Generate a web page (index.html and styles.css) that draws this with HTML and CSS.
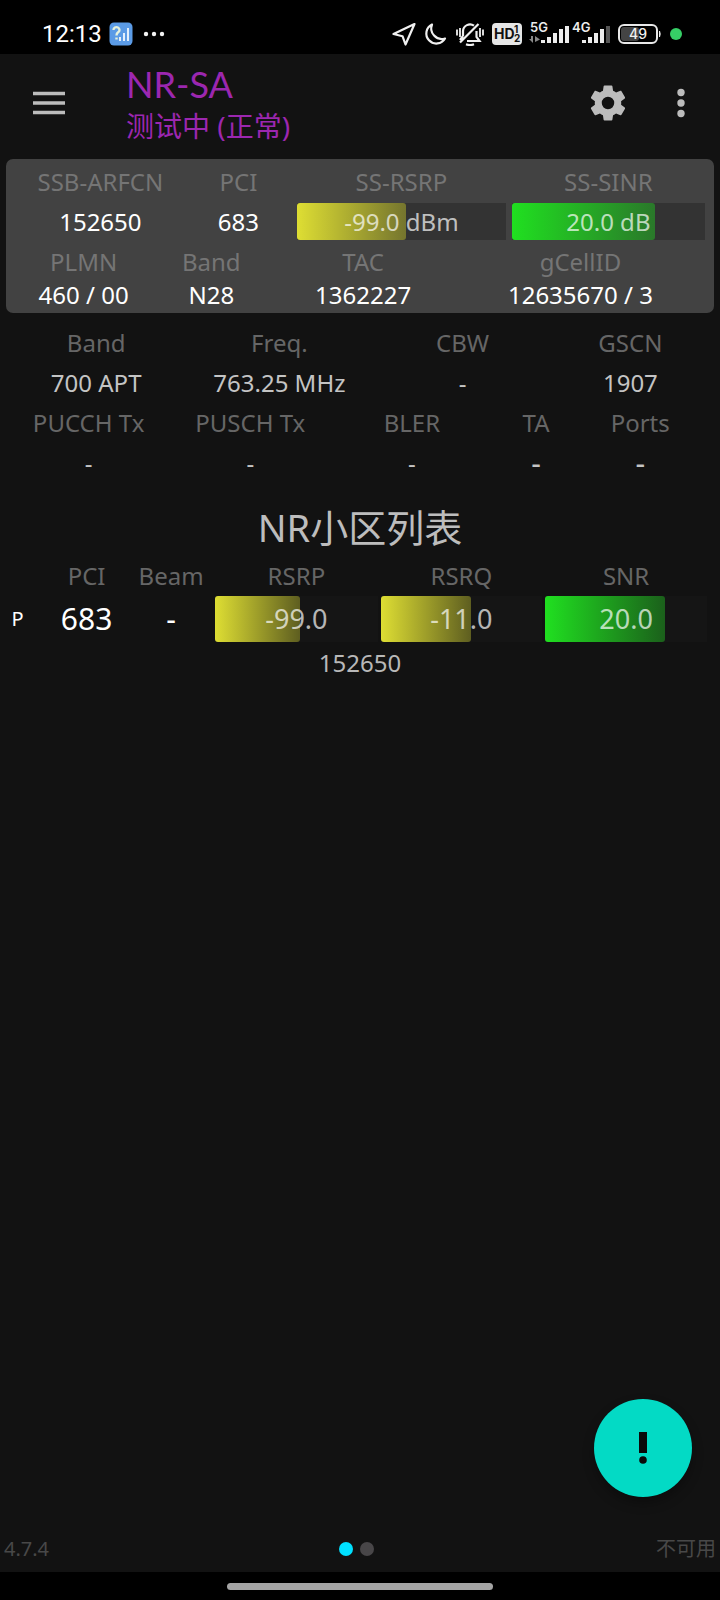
FILE: index.html
```html
<!DOCTYPE html>
<html lang="zh-CN">
<head>
<meta charset="utf-8">
<meta name="viewport" content="width=device-width, initial-scale=1">
<title>NR-SA</title>
<link rel="stylesheet" href="styles.css">
</head>
<body>
<div class="status-bar">
  <span class="clock">12:13</span>
  <svg class="app-icon" width="24" height="24" viewBox="0 0 24 24" aria-hidden="true">
    <rect x="0.5" y="0.5" width="23" height="23" rx="4.5" fill="#5b9be6"/>
    <path d="M4.5 8a3 2.8 0 1 1 4.6 2.3C7.8 11.2 7.5 11.8 7.5 13.5M7.5 15.5v2" fill="none" stroke="#e6f2dc" stroke-width="2.4"/>
    <path d="M11 19v-4M15 19v-8M19 19V6" stroke="#e3effc" stroke-width="2"/>
  </svg>
  <svg class="more-notices" width="22" height="6" viewBox="0 0 22 6" fill="#f2f2f2" aria-hidden="true">
    <circle cx="3" cy="3" r="2.2"/><circle cx="11" cy="3" r="2.2"/><circle cx="19" cy="3" r="2.2"/>
  </svg>
  <div class="status-icons">
    <svg width="24" height="24" viewBox="0 0 24 24" fill="none" stroke="#f0f0f0" stroke-width="2.2" stroke-linejoin="round" aria-hidden="true">
      <path d="M22.500 2 1.500 12l9 2.200 3 8.300z"/>
    </svg>
    <svg width="24" height="24" viewBox="0 0 24 24" fill="none" stroke="#f0f0f0" stroke-width="2.2" stroke-linejoin="round" aria-hidden="true">
      <path d="M8 2.500A10 10 0 1 0 21 16.500 10.600 10.600 0 0 1 8 2.500z"/>
    </svg>
    <svg width="28" height="24" viewBox="0 0 28 24" fill="none" stroke="#f0f0f0" stroke-width="2.2" aria-hidden="true">
      <path d="M7 14V9a7 7 0 0 1 11-5.300M20.500 9v6l3 4H11M4 20.500 22.500 2M7 14l-3 4M10 22.300q4 1.500 8 0"/>
      <path d="M1 7.500v6M4 6v9M24 6v9M27 7.500v6" stroke-width="1.800"/>
    </svg>
    <svg class="hd" width="30" height="24" viewBox="0 0 30 24" aria-hidden="true">
      <rect y="1" width="30" height="22" rx="4" fill="#e6e6e6"/>
      <text x="2" y="17" font-size="14" class="badge-text">HD</text>
      <text x="22" y="11" font-size="10" class="badge-text">1</text>
      <text x="22" y="20" font-size="10" class="badge-text">2</text>
    </svg>
    <svg class="signal" width="40" height="30" viewBox="0 -3 40 30" fill="#ececec" aria-hidden="true">
      <text x="1" y="10" font-size="13" class="net-text">5G</text>
      <path d="M0 17h2v-3h2v7zM6 14l5 3.500L6 20z" fill="#888"/>
      <path d="M12 18h4v3h-4zM18 15h4v6h-4zM24 11h4v10h-4zM30 7h4v14h-4zM36 4h4v17h-4z"/>
    </svg>
    <svg class="signal" width="38" height="30" viewBox="0 -3 38 30" fill="#ececec" aria-hidden="true">
      <text x="0" y="10" font-size="13" class="net-text">4G</text>
      <path d="M10 18h4v3h-4zM16 15h4v6h-4zM22 11h4v10h-4zM28 7h4v14h-4z"/>
      <path d="M34 4h4v17h-4z" fill="#555"/>
    </svg>
    <svg class="battery" width="44" height="24" viewBox="0 0 44 24" aria-hidden="true">
      <rect x="3" y="5" width="18" height="14" rx="3" fill="#444"/>
      <rect x="1" y="3" width="38" height="18" rx="5" fill="none" stroke="#e8e8e8" stroke-width="2"/>
      <path d="M41 9h1q1.500 3 0 6h-1z" fill="#e8e8e8"/>
      <text x="20" y="17" font-size="14" text-anchor="middle" class="level-text">49</text>
    </svg>
    <span class="live-dot"></span>
  </div>
</div>

<header class="app-bar">
  <button class="icon-button menu-button" type="button" aria-label="菜单">
    <svg width="34" height="24" viewBox="0 0 34 24" aria-hidden="true"><path d="M1 2.500h32M1 12h32M1 21.500h32" stroke="#bcbcbc" stroke-width="3.600"/></svg>
  </button>
  <div class="titles">
    <h1 class="mode">NR-SA</h1>
    <p class="mode-state">测试中 (正常)</p>
  </div>
  <button class="icon-button gear-button" type="button" aria-label="设置">
    <svg width="44" height="44" viewBox="0 0 24 24" fill="#bcbcbc" aria-hidden="true"><path d="M19.140 12.940c.04-.3.06-.61.06-.94 0-.32-.02-.64-.07-.94l2.030-1.580c.18-.14.23-.41.12-.61l-1.920-3.320c-.12-.22-.37-.29-.59-.22l-2.390.96c-.5-.38-1.030-.7-1.620-.94l-.36-2.540c-.04-.24-.24-.41-.48-.41h-3.840c-.24 0-.43.17-.47.41l-.36 2.540c-.59.24-1.130.57-1.620.94l-2.390-.96c-.22-.08-.47 0-.59.22L2.740 8.870c-.12.21-.08.47.12.61l2.030 1.580c-.05.3-.09.63-.09.94s.02.64.07.94l-2.030 1.580c-.18.14-.23.41-.12.61l1.920 3.320c.12.22.37.29.59.22l2.390-.96c.5.38 1.030.7 1.620.94l.36 2.540c.05.24.24.41.48.41h3.840c.24 0 .44-.17.47-.41l.36-2.540c.59-.24 1.130-.56 1.620-.94l2.390.96c.22.08.47 0 .59-.22l1.920-3.320c.12-.22.07-.47-.12-.61l-2.010-1.580zM12 15.400A3.400 3.400 0 1 1 12 8.600a3.400 3.400 0 0 1 0 6.800z"/></svg>
  </button>
  <button class="icon-button more-button" type="button" aria-label="更多">
    <svg width="8" height="30" viewBox="0 0 8 30" fill="#bcbcbc" aria-hidden="true"><circle cx="4" cy="4.500" r="3.700"/><circle cx="4" cy="15" r="3.700"/><circle cx="4" cy="25.500" r="3.700"/></svg>
  </button>
</header>

<main class="content">
  <section class="serving-card">
    <table class="grid serving-signal">
      <thead><tr><th class="c1">SSB-ARFCN</th><th class="c2">PCI</th><th class="c3">SS-RSRP</th><th class="c4">SS-SINR</th></tr></thead>
      <tbody><tr>
        <td>152650</td><td>683</td>
        <td><div class="bar"><span class="fill yellow" style="width:52%"></span><span class="reading">-99.0 dBm</span></div></td>
        <td><div class="bar"><span class="fill green" style="width:74%"></span><span class="reading">20.0 dB</span></div></td>
      </tr></tbody>
    </table>
    <table class="grid serving-id">
      <thead><tr><th class="c1">PLMN</th><th class="c2">Band</th><th class="c3">TAC</th><th class="c4">gCellID</th></tr></thead>
      <tbody><tr><td>460 / 00</td><td>N28</td><td>1362227</td><td>12635670 / 3</td></tr></tbody>
    </table>
  </section>

  <section class="details">
    <table class="grid radio">
      <thead><tr><th class="c1">Band</th><th class="c2">Freq.</th><th class="c3">CBW</th><th class="c4">GSCN</th></tr></thead>
      <tbody><tr><td>700 APT</td><td>763.25 MHz</td><td>-</td><td>1907</td></tr></tbody>
    </table>
    <table class="grid power">
      <thead><tr><th class="c1">PUCCH Tx</th><th class="c2">PUSCH Tx</th><th class="c3">BLER</th><th class="c4">TA</th><th class="c5">Ports</th></tr></thead>
      <tbody><tr><td>-</td><td>-</td><td>-</td><td class="large">-</td><td class="large">-</td></tr></tbody>
    </table>
  </section>

  <section class="cells">
    <h2 class="cells-title">NR小区列表</h2>
    <table class="grid cell-list">
      <thead><tr><th class="c0"></th><th class="c1">PCI</th><th class="c2">Beam</th><th class="c3">RSRP</th><th class="c4">RSRQ</th><th class="c5">SNR</th></tr></thead>
      <tbody><tr>
        <td class="flag">P</td><td class="pci">683</td><td class="pci">-</td>
        <td><div class="bar"><span class="fill yellow" style="width:52%"></span><span class="reading">-99.0</span></div></td>
        <td><div class="bar"><span class="fill yellow" style="width:56%"></span><span class="reading">-11.0</span></div></td>
        <td><div class="bar"><span class="fill green" style="width:74%"></span><span class="reading">20.0</span></div></td>
      </tr></tbody>
    </table>
    <p class="arfcn">152650</p>
  </section>
</main>

<footer class="footer">
  <span>4.7.4</span>
  <div class="pager"><span class="dot active"></span><span class="dot"></span></div>
  <span class="availability">不可用</span>
</footer>
<div class="gesture-nav"><span class="pill"></span></div>

<button class="fab" type="button" aria-label="提示">
  <svg width="10" height="34" viewBox="0 0 10 34" fill="#0a0a0a" aria-hidden="true"><path d="M1 1h8v21H1z"/><circle cx="5" cy="29" r="3.800"/></svg>
</button>
</body>
</html>
```
FILE: styles.css
```css
* {
  box-sizing: border-box;
}

body {
  margin: 0;
  min-height: 100vh;
  display: flex;
  flex-direction: column;
  position: relative;
  background: #121212;
  color: #fff;
  font-family: "Noto Sans", "Noto Sans CJK SC", sans-serif;
  font-size: 24px;
  line-height: 24px;
}

h1, h2, p {
  margin: 0;
  font-weight: 400;
}

/* System status bar */
.status-bar {
  display: flex;
  align-items: center;
  height: 54px;
  padding: 14px 38px 0 42px;
  background: #000;
}

.clock {
  font-family: Roboto, sans-serif;
  font-size: 24px;
}

.app-icon {
  margin-left: 7px;
}

.more-notices {
  margin-left: 10px;
}

.status-icons {
  display: flex;
  align-items: center;
  gap: 8px;
  margin-left: auto;
}

.status-icons text {
  font-family: Inter, sans-serif;
}

.signal {
  margin-left: -1px;
}

.signal + .signal {
  margin-left: -5px;
}

.badge-text {
  font-weight: 700;
  fill: #111;
}

.net-text {
  font-weight: 600;
  fill: #ececec;
}

.level-text {
  font-weight: 500;
  fill: #f0f0f0;
}

.live-dot {
  width: 12px;
  height: 12px;
  border-radius: 50%;
  background: #36cf66;
}

/* App bar */
.app-bar {
  display: flex;
  align-items: center;
  min-height: 98px;
  padding: 0 19px 0 20px;
}

.icon-button {
  display: flex;
  align-items: center;
  justify-content: center;
  padding: 0;
  height: 58px;
  border: 0;
  background: none;
}

.menu-button {
  width: 58px;
}

.gear-button {
  width: 58px;
  margin-right: 24px;
}

.more-button {
  width: 40px;
}

.titles {
  flex: 1;
  padding-left: 48px;
  color: #9c27b0;
}

.mode {
  font-family: Lato, sans-serif;
  font-size: 36px;
  line-height: 46px;
}

.mode-state {
  font-size: 28px;
  line-height: 38px;
}

/* Label/value tables */
.content {
  flex: 1;
}

.grid {
  table-layout: fixed;
  border-collapse: collapse;
}

.grid th,
.grid td {
  padding: 0;
  height: 40px;
  text-align: center;
  vertical-align: middle;
  white-space: nowrap;
}

.grid th {
  color: #757575;
  font-weight: 400;
}

.bar {
  display: grid;
  background: #333;
}

.fill,
.reading {
  grid-area: 1 / 1;
}

.fill {
  border-radius: 3px;
}

.yellow {
  background: linear-gradient(90deg, #dede33, #75752e);
}

.green {
  background: linear-gradient(90deg, #20e020, #2a782a);
}

.reading {
  align-self: center;
  color: rgba(255, 255, 255, 0.7);
}

/* Serving cell */
.serving-card {
  margin: 7px 6px 0;
  padding: 2px 0 6px;
  border-radius: 7px;
  background: #424242;
}

.serving-signal {
  width: calc(100% - 9px);
}

.serving-signal .c1 { width: 27%; }
.serving-signal .c2 { width: 12.5%; }
.serving-signal .c3 { width: 32%; }
.serving-signal .c4 { width: 28.5%; }

.serving-card .serving-signal th {
  height: 42px;
}

.serving-card .serving-signal td {
  height: 37px;
}

.serving-signal th:nth-child(3),
.serving-signal td:nth-child(3) {
  padding-left: 15px;
}

.serving-signal th:nth-child(4),
.serving-signal td:nth-child(4) {
  padding-left: 6px;
}

.serving-signal .bar {
  height: 37px;
}

.serving-id {
  width: calc(100% - 18px);
}

.serving-id .c1 { width: 22.5%; }
.serving-id .c2 { width: 14.5%; }
.serving-id .c3 { width: 29.5%; }
.serving-id .c4 { width: 33.5%; }

.serving-card .serving-id th {
  height: 43px;
}

.serving-card .serving-id td {
  height: 24px;
}

/* Radio details */
.details {
  padding-top: 10px;
}

.details th {
  color: #666;
}

.details td {
  color: #c4c4c4;
}

.radio {
  width: calc(100% - 18px);
}

.radio .c1 { width: 27.4%; }
.radio .c2 { width: 24.8%; }
.radio .c3 { width: 27.4%; }
.radio .c4 { width: 20.4%; }

.power {
  width: calc(100% - 11px);
}

.power .c1 { width: 25%; }
.power .c2 { width: 20.6%; }
.power .c3 { width: 25%; }
.power .c4 { width: 10%; }
.power .c5 { width: 19.4%; }

.details .large {
  font-size: 30px;
}

/* Cell list */
.cells-title {
  padding-top: 20px;
  font-size: 38px;
  line-height: 48px;
  text-align: center;
  color: #bdbdbd;
}

.cell-list {
  width: calc(100% - 13px);
  margin-top: 5px;
}

.cell-list .c0 { width: 5%; }
.cell-list .c1 { width: 14.5%; }
.cell-list .c2 { width: 9.4%; }
.cell-list .c3 { width: 24.5%; }
.cell-list .c4 { width: 23.3%; }
.cell-list .c5 { width: 23.3%; }

.cell-list th {
  color: #666;
}

.cells .cell-list td {
  height: 46px;
}

.cell-list th:nth-child(4),
.cell-list td:nth-child(4) {
  padding-left: 11px;
}

.cell-list th:nth-child(n + 5),
.cell-list td:nth-child(n + 5) {
  padding-left: 3px;
}

.cell-list .flag {
  font-size: 20px;
}

.cell-list .pci {
  font-size: 30px;
}

.cell-list .bar {
  height: 46px;
  background: #151515;
  font-size: 27px;
}

.cell-list .yellow {
  background: linear-gradient(90deg, #dede33, #5e5e20);
}

.cell-list .green {
  background: linear-gradient(90deg, #20e020, #1b601b);
}

.arfcn {
  padding-top: 9px;
  text-align: center;
  color: #b8b8b8;
}

/* Footer */
.footer {
  display: grid;
  grid-template-columns: 1fr auto 1fr;
  align-items: center;
  height: 46px;
  padding: 0 4px;
  font-size: 20px;
  color: #484848;
}

.pager {
  display: flex;
}

.dot {
  width: 14px;
  height: 14px;
  margin-right: 7px;
  border-radius: 50%;
  background: #484648;
}

.dot.active {
  background: #00e0ff;
}

.availability {
  text-align: right;
}

.gesture-nav {
  display: flex;
  justify-content: center;
  height: 28px;
  padding-top: 11px;
  background: #000;
}

.pill {
  width: 37%;
  height: 7px;
  border-radius: 4px;
  background: #a5a5a5;
}

.fab {
  position: absolute;
  right: 28px;
  bottom: 103px;
  display: flex;
  align-items: center;
  justify-content: center;
  width: 98px;
  height: 98px;
  padding: 0;
  border: 0;
  border-radius: 50%;
  background: #03dac5;
  box-shadow: 0 6px 12px rgba(0, 0, 0, 0.3);
}
```
